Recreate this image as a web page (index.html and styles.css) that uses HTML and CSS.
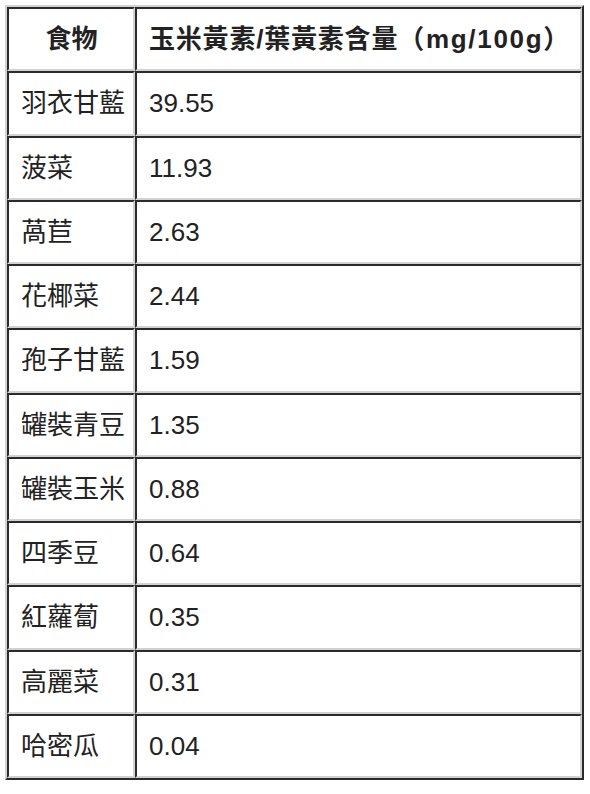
FILE: index.html
```html
<!DOCTYPE html>
<html lang="zh-Hant">
<head>
<meta charset="utf-8">
<title>玉米黃素/葉黃素含量</title>
<link rel="stylesheet" href="styles.css">
</head>
<body>
<div class="page">
<table class="data">
<thead>
<tr><th class="col-food">食物</th><th class="col-val">玉米黃素/葉黃素含量<span class="unit">（mg/100g）</span></th></tr>
</thead>
<tbody>
<tr><td>羽衣甘藍</td><td>39.55</td></tr>
<tr><td>菠菜</td><td>11.93</td></tr>
<tr><td>萵苣</td><td>2.63</td></tr>
<tr><td>花椰菜</td><td>2.44</td></tr>
<tr><td>孢子甘藍</td><td>1.59</td></tr>
<tr><td>罐裝青豆</td><td>1.35</td></tr>
<tr><td>罐裝玉米</td><td>0.88</td></tr>
<tr><td>四季豆</td><td>0.64</td></tr>
<tr><td>紅蘿蔔</td><td>0.35</td></tr>
<tr><td>高麗菜</td><td>0.31</td></tr>
<tr><td>哈密瓜</td><td>0.04</td></tr>
</tbody>
</table>
</div>
</body>
</html>
```
FILE: styles.css
```css
html, body {
  margin: 0;
  padding: 0;
  background: #ffffff;
}
.page {
  padding: 5px;
}
.data {
  width: 579px;
  table-layout: fixed;
  border-collapse: separate;
  border-spacing: 0;
  border-style: solid;
  border-width: 2px;
  border-color: #d2d2d2 #2b2b2b #2b2b2b #d2d2d2;
  font-family: "Liberation Sans", "Noto Sans CJK TC", sans-serif;
  font-size: 26px;
  color: #222222;
}
.data th,
.data td {
  border-style: solid;
  border-width: 2px;
  border-color: #2b2b2b #d2d2d2 #d2d2d2 #2b2b2b;
  padding: 12px 11px 12px 12px;
  line-height: 36.25px;
  height: 36.25px;
  text-align: left;
  vertical-align: middle;
  white-space: nowrap;
}
.data th {
  font-weight: bold;
}
.data th.col-food {
  text-align: center;
}
.data th.col-val {
  letter-spacing: 0.8px;
}
.unit {
  letter-spacing: 1.7px;
}
.col-food {
  width: 128px;
  box-sizing: border-box;
}
.col-val {
  box-sizing: border-box;
}
```
